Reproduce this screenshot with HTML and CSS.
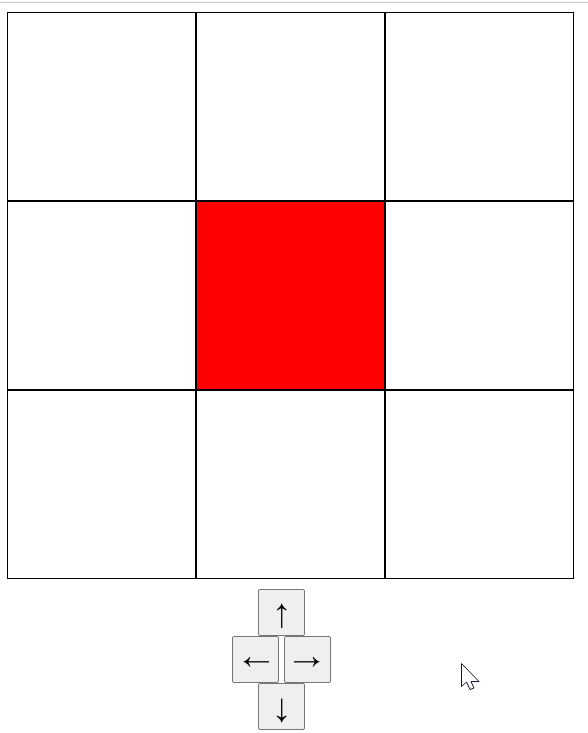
FILE: index.html
```
<!DOCTYPE html>
<html lang="en">
<head>
<meta charset="utf-8">
<title>Grid</title>
<link rel="stylesheet" href="styles.css">
</head>
<body>
<main>
  <div class="board">
    <div class="cell"></div><div class="cell"></div><div class="cell"></div>
    <div class="cell"></div><div class="cell active"></div><div class="cell"></div>
    <div class="cell"></div><div class="cell"></div><div class="cell"></div>
  </div>
  <div class="controls">
    <button type="button" aria-label="Up">
      <svg viewBox="0 0 45 45"><path class="shaft" d="M22.7 16V38"/><path d="M22.7 13C23.5 16 25.3 18 27.7 19.6L27.1 20.4C25.3 19.4 24 18.6 22.7 18.2C21.4 18.6 20.1 19.4 18.3 20.4L17.7 19.6C20.1 18 21.9 16 22.7 13Z"/></svg>
    </button>
    <div class="row">
      <button type="button" aria-label="Left">
        <svg viewBox="0 0 45 45"><path class="shaft" d="M13 24.8H36"/><path d="M10 24.8C13 24 15 22.2 16.6 19.8L17.4 20.4C16.4 22.2 15.6 23.5 15.2 24.8C15.6 26.1 16.4 27.4 17.4 29.2L16.6 29.8C15 27.4 13 25.6 10 24.8Z"/></svg>
      </button>
      <button type="button" aria-label="Right">
        <svg viewBox="0 0 45 45"><path class="shaft" d="M9 24.8H32"/><path d="M35 24.8C32 24 30 22.2 28.4 19.8L27.6 20.4C28.6 22.2 29.4 23.5 29.8 24.8C29.4 26.1 28.6 27.4 27.6 29.2L28.4 29.8C30 27.4 32 25.6 35 24.8Z"/></svg>
      </button>
    </div>
    <button type="button" aria-label="Down">
      <svg viewBox="0 0 45 45"><path class="shaft" d="M22.7 14.5V36"/><path d="M22.7 39C23.5 36 25.3 34 27.7 32.4L27.1 31.6C25.3 32.6 24 33.4 22.7 33.8C21.4 33.4 20.1 32.6 18.3 31.6L17.7 32.4C20.1 34 21.9 36 22.7 39Z"/></svg>
    </button>
  </div>
</main>
<svg class="cursor" width="19" height="28" viewBox="0 0 19 28" aria-hidden="true">
  <path d="M.5 .5V23.5L5.5 19L9 26.5L13 25L10 18.5H18Z"/>
</svg>
</body>
</html>
```
FILE: styles.css
```
* {
  box-sizing: border-box;
}

body {
  margin: 2px 0 0;
  border-top: 1px solid #c8c8c8;
  background: #fff;
  font-family: "Liberation Sans", Arial, sans-serif;
}

main {
  padding: 9px 14px 0 7px;
}

.board {
  display: grid;
  grid-template-columns: repeat(3, 1fr);
}

.cell {
  aspect-ratio: 1;
  border: 1px solid #000;
}

.active {
  background: #f00;
}

.controls {
  display: flex;
  flex-direction: column;
  align-items: center;
  margin-top: 10px;
  padding-right: 18px;
}

.row {
  display: flex;
  gap: 5px;
}

button {
  width: 47px;
  height: 47px;
  padding: 0;
  border: 1px solid #767676;
  border-radius: 2px;
  background: #efefef;
  color: #000;
}

button svg {
  display: block;
  width: 100%;
  fill: currentColor;
}

.shaft {
  fill: none;
  stroke: currentColor;
  stroke-width: 1.3;
}

.cursor {
  position: absolute;
  left: 461px;
  top: 663px;
  fill: #fff;
  stroke: #15152a;
  stroke-width: 1;
}
```
